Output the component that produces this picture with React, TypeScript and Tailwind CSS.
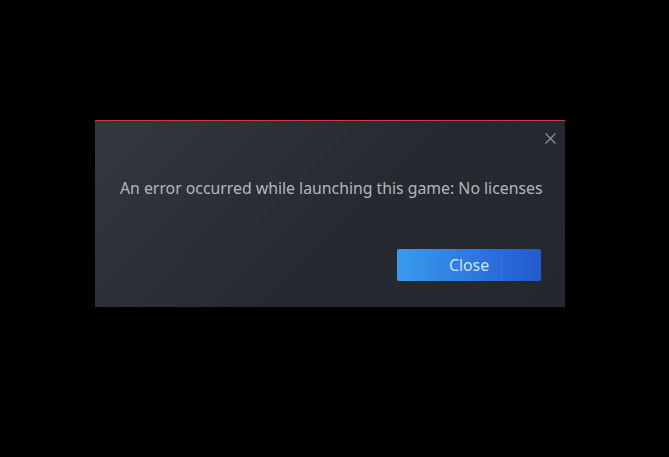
import React from 'react';

const CloseIcon: React.FC = () => (
  <svg width="11" height="11" viewBox="0 0 11 11" fill="none" stroke="#8a939c" strokeWidth="1.3">
    <path d="M0.5 0.5 L10.5 10.5 M10.5 0.5 L0.5 10.5" />
  </svg>
);

export default function App() {
  return (
    <div className="w-[669px] h-[457px] bg-black flex items-start justify-start pt-[120px] pl-[95px]">
      <div
        className="relative w-[470px] h-[187px] border-t border-[#d9373a] bg-[linear-gradient(135deg,#33373f_0%,#262930_55%,#24272e_100%)] flex flex-col pl-[25px] pr-[24px] pt-[56px] pb-[26px]"
        style={{ fontFamily: '"Noto Sans", "Open Sans", sans-serif' }}
      >
        <button className="absolute top-[11px] right-[8px] p-[1px]">
          <CloseIcon />
        </button>
        <p className="text-[15.8px] leading-[22px] text-[#b3b7bb] whitespace-nowrap">
          An error occurred while launching this game: No licenses
        </p>
        <div className="mt-auto flex justify-end">
          <button className="w-[144px] h-[32px] pt-[1px] rounded-[2px] bg-[linear-gradient(to_right,#3a9bed,#2359cf)] text-[15.8px] text-[#cde3fa]">
            Close
          </button>
        </div>
      </div>
    </div>
  );
}
